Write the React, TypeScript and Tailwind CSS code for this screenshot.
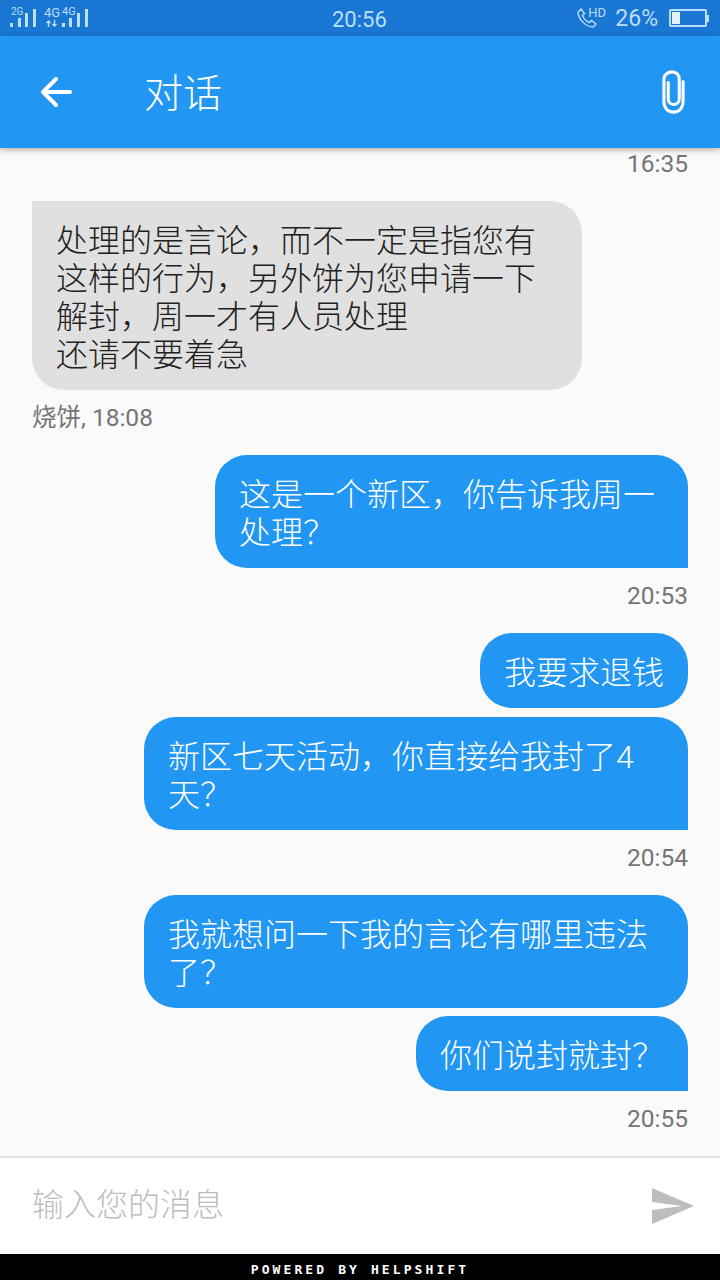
const cjk = "font-['Roboto','Noto_Sans_CJK_SC',sans-serif]";

function Bars() {
    const heights = [4, 9, 14, 18];
    return (
        <div className="flex items-end gap-[4.6px]">
            {heights.map((h, i) => (
                <div key={i} className="w-[3px] bg-[#bbdefb]" style={{ height: h }} />
            ))}
        </div>
    );
}

function StatusBar() {
    return (
        <div className="flex h-[36px] items-center bg-[#1976d2] pr-[11px] text-[#bbdefb] font-['Roboto']">
            <div className="relative flex h-[36px] w-[100px] items-end pb-[9px] pl-[10px]">
                <Bars />
                <div className="ml-[26px]">
                    <Bars />
                </div>
                <span className="absolute left-[11px] top-[6px] text-[10px] leading-[11px]">2G</span>
                <span className="absolute left-[44px] top-[6px] text-[13px] leading-[13px]">4G</span>
                <span className="absolute left-[62px] top-[6px] text-[11px] leading-[11px]">4G</span>
                <svg className="absolute left-[46px] top-[20px]" width="11" height="7" viewBox="0 0 11 7" fill="none" stroke="currentColor" strokeWidth="1.4">
                    <path d="M2.5 7V1M0.5 3L2.5 1L4.5 3M8.5 0V6M6.5 4L8.5 6L10.5 4" />
                </svg>
            </div>
            <div className="flex-1 pl-[232px] pt-[3px] text-[22px]">20:56</div>
            <div className="relative h-[20px] w-[28px]">
                <svg width="20" height="20" viewBox="0 0 20 20" fill="none" stroke="currentColor" strokeWidth="1.4">
                    <path d="M1 4 L4 1 L7.5 5.5 L5.5 7.5 C6.5 10 9.5 13.5 12.5 14.5 L14.5 12.5 L19 16 L16 19 C9 19 1 11 1 4 Z" />
                </svg>
                <span className="absolute left-[11px] top-[-2px] text-[13px] leading-[13px]">HD</span>
            </div>
            <span className="ml-[10px] pt-[3px] text-[23px]">26%</span>
            <div className="ml-[11px] flex items-center">
                <div className="flex h-[18px] w-[38px] rounded-[2px] border-2 border-[#bbdefb] p-px">
                    <div className="w-[8px] bg-[#e3f2fd]" />
                </div>
                <div className="h-[7px] w-[2px] bg-[#bbdefb]" />
            </div>
        </div>
    );
}

function Header() {
    return (
        <div className="relative z-10 flex h-[112px] items-center bg-[#2196f3] pl-[40px] pr-[35px] text-white shadow-[0_2px_6px_rgba(0,0,0,0.3)]">
            <svg width="32" height="32" viewBox="0 0 32 32" fill="none" stroke="currentColor" strokeWidth="4" strokeLinecap="round" strokeLinejoin="round">
                <path d="M30 16H4M16 3L3 16L16 29" />
            </svg>
            <div className={`ml-[72px] flex-1 pt-[4px] text-[39px] font-light ${cjk}`}>对话</div>
            <svg width="23" height="46" viewBox="0 0 24 46" fill="none" stroke="currentColor" strokeWidth="3.2" strokeLinecap="round">
                <path d="M22 12V33C22 39.5 18 44 12 44C6 44 2 39.5 2 33V10C2 5 6 2 10.5 2C15 2 18 5 18 10V30C18 33.5 15.5 36 12 36C8.5 36 6.5 33.5 6.5 30V13" />
            </svg>
        </div>
    );
}

function Time({ children, left }: { children: string; left?: boolean }) {
    return (
        <div className={`pt-px text-[24.5px] leading-[30px] text-[#757575] ${cjk} ${left ? "" : "text-right"}`}>{children}</div>
    );
}

function Bubble({ lines, me = true, square = false, width }: { lines: string[]; me?: boolean; square?: boolean; width?: number }) {
    return (
        <div className={`flex ${me ? "justify-end" : "justify-start"}`}>
            <div
                style={{ width }}
                className={`rounded-[32px] pl-[24px] pr-[24px] pt-[21px] pb-[16px] text-[32px] leading-[38px] font-light ${cjk} ${
                    me ? "bg-[#2196f3] text-white" : "rounded-tl-none bg-[#e0e0e0] text-[#212121]"
                } ${square ? "rounded-br-none" : ""}`}>
                {lines.map((l) => (
                    <div key={l}>{l}</div>
                ))}
            </div>
        </div>
    );
}

export default function App() {
    return (
        <div className="flex h-[1280px] w-[720px] flex-col overflow-hidden bg-[#fafafa]">
            <StatusBar />
            <Header />
            <div className="flex flex-1 flex-col px-[32px]">
                <Time>16:35</Time>
                <div className="mt-[22px]">
                    <Bubble
                        me={false}
                        width={550}
                        lines={["处理的是言论，而不一定是指您有", "这样的行为，另外饼为您申请一下", "解封，周一才有人员处理", "还请不要着急"]}
                    />
                </div>
                <div className="mt-[12px]">
                    <Time left>烧饼, 18:08</Time>
                </div>
                <div className="mt-[22px]">
                    <Bubble square width={473} lines={["这是一个新区，你告诉我周一", "处理？"]} />
                </div>
                <div className="mt-[12px]">
                    <Time>20:53</Time>
                </div>
                <div className="mt-[22px]">
                    <Bubble width={208} lines={["我要求退钱"]} />
                </div>
                <div className="mt-[9px]">
                    <Bubble square width={544} lines={["新区七天活动，你直接给我封了4", "天？"]} />
                </div>
                <div className="mt-[12px]">
                    <Time>20:54</Time>
                </div>
                <div className="mt-[22px]">
                    <Bubble width={544} lines={["我就想问一下我的言论有哪里违法", "了？"]} />
                </div>
                <div className="mt-[8px]">
                    <Bubble square width={272} lines={["你们说封就封？"]} />
                </div>
                <div className="mt-[12px]">
                    <Time>20:55</Time>
                </div>
            </div>
            <div className="flex h-[98px] items-center border-t-2 border-[#e0e0e0] bg-white pl-[32px] pr-[26px]">
                <div className={`flex-1 pb-[2px] text-[32px] font-light text-[#bdbdbd] ${cjk}`}>输入您的消息</div>
                <svg width="42" height="36" viewBox="0 0 42 36" fill="#bdbdbd">
                    <path d="M0 0 L42 18 L0 36 L0 22 L30 18 L0 14 Z" />
                </svg>
            </div>
            <div className="flex h-[26px] items-center justify-center bg-black pt-[5px] text-[13px] font-bold tracking-[3.1px] text-white font-['DejaVu_Sans_Mono',monospace]">
                POWERED BY HELPSHIFT
            </div>
        </div>
    );
}
